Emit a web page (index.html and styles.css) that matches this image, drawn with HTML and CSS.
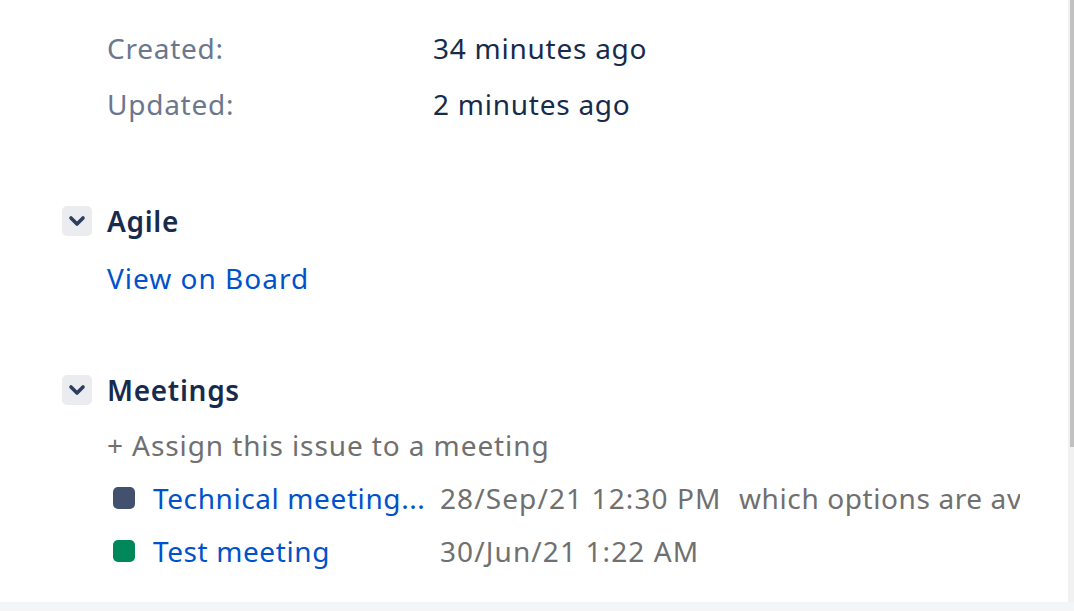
FILE: index.html
```html
<!DOCTYPE html>
<html>
<head>
<meta charset="utf-8">
<link rel="stylesheet" href="styles.css">
</head>
<body>
<div class="page">
  <div class="panel">
    <div class="dates">
      <div class="date-row"><span class="label">Created:</span><span class="value">34 minutes ago</span></div>
      <div class="date-row"><span class="label">Updated:</span><span class="value">2 minutes ago</span></div>
    </div>

    <section class="module agile">
      <div class="module-head">
        <span class="toggle"><svg width="18" height="12" viewBox="0 0 18 12"><path d="M3 3 L9 9 L15 3" fill="none" stroke="#2c3e5d" stroke-width="3.6" stroke-linecap="round" stroke-linejoin="round"/></svg></span>
        <h2 class="module-title">Agile</h2>
      </div>
      <div class="module-body">
        <a class="link board-link">View on Board</a>
      </div>
    </section>

    <section class="module meetings">
      <div class="module-head">
        <span class="toggle"><svg width="18" height="12" viewBox="0 0 18 12"><path d="M3 3 L9 9 L15 3" fill="none" stroke="#2c3e5d" stroke-width="3.6" stroke-linecap="round" stroke-linejoin="round"/></svg></span>
        <h2 class="module-title">Meetings</h2>
      </div>
      <div class="module-body">
        <div class="assign">+ Assign this issue to a meeting</div>
        <div class="meeting-list">
          <div class="meeting">
            <span class="dot dot-slate"></span>
            <a class="link meeting-name">Technical meeting...</a>
            <span class="meeting-date">28/Sep/21 12:30 PM</span>
            <span class="meeting-desc">which options are available</span>
          </div>
          <div class="meeting">
            <span class="dot dot-green"></span>
            <a class="link meeting-name">Test meeting</a>
            <span class="meeting-date">30/Jun/21 1:22 AM</span>
            <span class="meeting-desc"></span>
          </div>
        </div>
      </div>
    </section>
  </div>
  <div class="scrollbar"><div class="thumb"></div></div>
</div>
</body>
</html>
```

FILE: styles.css
```css
* { box-sizing: border-box; }
html, body { margin: 0; padding: 0; }
body {
  background: #f4f5f7;
  font-family: "Noto Sans", "Open Sans", sans-serif;
  width: 1074px;
  height: 611px;
  overflow: hidden;
}
.page {
  display: flex;
  height: 602px;
}
.panel {
  width: 1068px;
  height: 602px;
  background: #ffffff;
  padding: 20px 0 0 62px;
  overflow: hidden;
}
.scrollbar {
  width: 6px;
  background: #f1f1f1;
  display: flex;
  justify-content: flex-end;
}
.thumb {
  width: 4px;
  height: 447px;
  background: #c1c1c1;
}
.dates {
  padding-left: 45px;
}
.date-row {
  display: grid;
  grid-template-columns: 326px auto;
  height: 56px;
  align-items: center;
  font-size: 28px;
  letter-spacing: 0.75px;
}
.label { color: #6b778c; }
.value { color: #172b4d; }

.module-head {
  display: flex;
  align-items: center;
  gap: 15px;
  height: 40px;
}
.toggle {
  width: 30px;
  height: 30px;
  border-radius: 5px;
  background: #ebecf0;
  display: flex;
  align-items: center;
  justify-content: center;
}
.module-title {
  margin: 0;
  font-size: 28px;
  font-weight: 600;
  color: #172b4d;
  letter-spacing: 0.7px;
}
.module-body {
  padding-left: 45px;
}
.agile { margin-top: 69px; }
.meetings { margin-top: 64px; }
.link { color: #0052cc; text-decoration: none; }
.board-link {
  display: block;
  font-size: 28px;
  line-height: 56px;
  margin-top: 9px;
  letter-spacing: 1px;
}
.assign {
  font-size: 28px;
  line-height: 52px;
  margin-top: 9px;
  color: #707070;
  letter-spacing: 0.9px;
}
.meeting-list {
  width: 913px;
  overflow: hidden;
}
.meeting {
  display: flex;
  align-items: center;
  height: 53px;
  white-space: nowrap;
  font-size: 28px;
  color: #707070;
}
.dot {
  flex: none;
  width: 22px;
  height: 22px;
  border-radius: 5px;
  margin-left: 6px;
  margin-right: 18px;
}
.dot-slate { background: #42526e; }
.dot-green { background: #00875a; }
.meeting-name { flex: none; width: 287px; letter-spacing: 0.6px; }
.meeting-date { flex: none; width: 299px; letter-spacing: 1.1px; }
.meeting-desc { flex: none; letter-spacing: 0.6px; }
```
